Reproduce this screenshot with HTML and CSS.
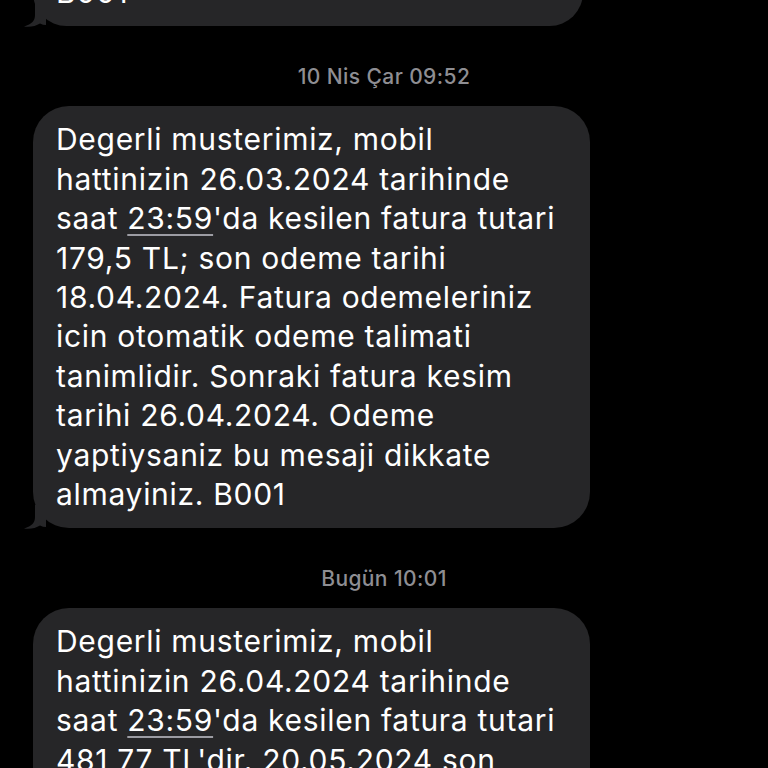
FILE: index.html
```html
<!DOCTYPE html>
<html lang="tr">
<head>
<meta charset="utf-8">
<link rel="stylesheet" href="styles.css">
</head>
<body>
<div class="thread">
  <div class="msg msg-prev">
    <div class="bubble">B001</div>
    <svg class="tail" viewBox="0 0 24 24" width="24" height="24"><path d="M13 0 V12 C13 18 10 21 2 23.5 C8 24.5 14 23 18 20.5 C20 21.5 22 22 24 22 V0 Z"/></svg>
  </div>

  <div class="stamp">10 Nis Çar 09:52</div>

  <div class="msg">
    <div class="bubble">Degerli musterimiz, mobil<br>hattinizin 26.03.2024 tarihinde<br>saat <span class="link">23:59</span>'da kesilen fatura tutari<br>179,5 TL; son odeme tarihi<br>18.04.2024. Fatura odemeleriniz<br>icin otomatik odeme talimati<br>tanimlidir. Sonraki fatura kesim<br>tarihi 26.04.2024. Odeme<br>yaptiysaniz bu mesaji dikkate<br>almayiniz. B001</div>
    <svg class="tail" viewBox="0 0 24 24" width="24" height="24"><path d="M13 0 V12 C13 18 10 21 2 23.5 C8 24.5 14 23 18 20.5 C20 21.5 22 22 24 22 V0 Z"/></svg>
  </div>

  <div class="stamp">Bugün 10:01</div>

  <div class="msg">
    <div class="bubble">Degerli musterimiz, mobil<br>hattinizin 26.04.2024 tarihinde<br>saat <span class="link">23:59</span>'da kesilen fatura tutari<br>481,77 TL'dir. 20.05.2024 son<br>odeme tarihli faturanizi<br>odemeyi unutmayiniz. B001</div>
  </div>
</div>
</body>
</html>
```

FILE: styles.css
```css
html, body {
  margin: 0;
  padding: 0;
  background: #000;
}
body {
  width: 768px;
  height: 768px;
  overflow: hidden;
  font-family: "Inter", "Roboto", "Liberation Sans", sans-serif;
  color: #fff;
}
.thread {
  display: flex;
  flex-direction: column;
  align-items: flex-start;
  padding-left: 33px;
}
.msg {
  position: relative;
}
.msg-prev {
  margin-top: -41px;
}
.bubble {
  background: #262628;
  border-radius: 36px;
  padding: 14px 35px 14px 23px;
  font-size: 30px;
  line-height: 39.4px;
  letter-spacing: 0.7px;
  white-space: nowrap;
}
.msg-prev .bubble {
  box-sizing: border-box;
  width: 550px;
}
.tail {
  position: absolute;
  left: -11px;
  bottom: -1px;
  fill: #262628;
}
.link {
  text-decoration: underline;
  text-decoration-color: rgba(235, 235, 245, 0.6);
  text-decoration-thickness: 2px;
  text-underline-offset: 5px;
}
.stamp {
  align-self: stretch;
  margin-left: -33px;
  text-align: center;
  color: #8e8e93;
  font-size: 21px;
  line-height: 22px;
  font-weight: 500;
  letter-spacing: 0.4px;
  margin-top: 40px;
  margin-bottom: 18px;
}
```
